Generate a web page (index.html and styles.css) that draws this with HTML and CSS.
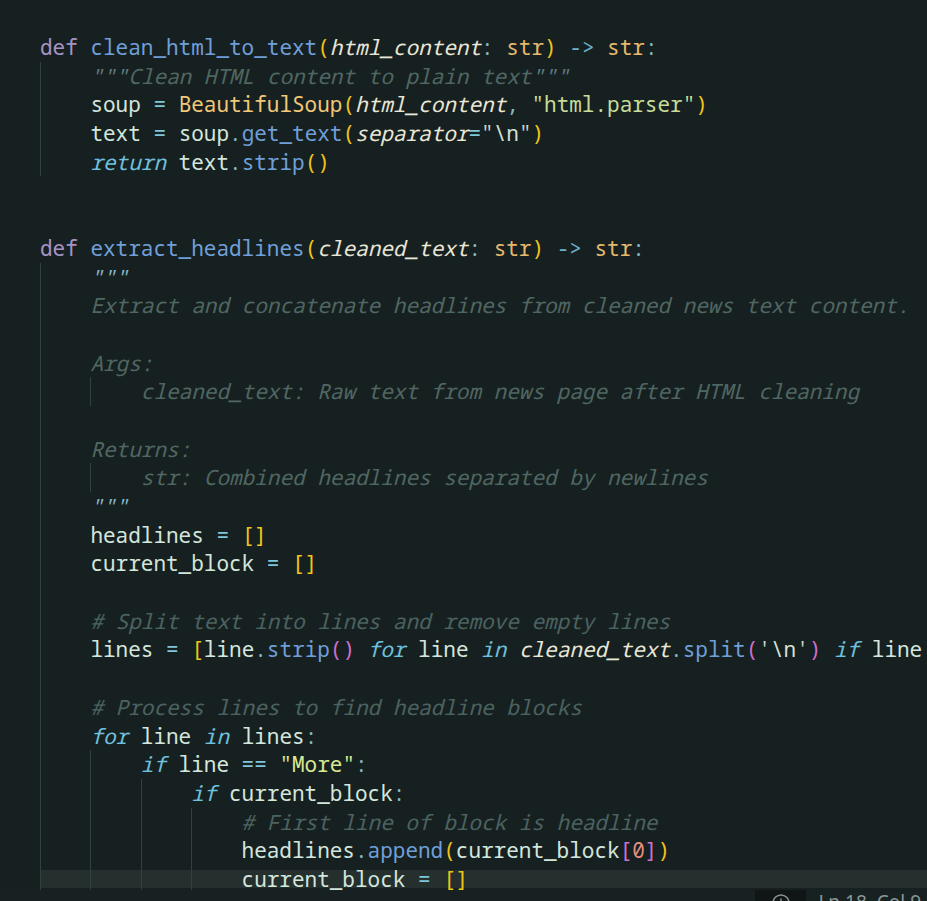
FILE: index.html
```html
<!DOCTYPE html>
<html>
<head>
<meta charset="utf-8">
<link rel="stylesheet" href="styles.css">
</head>
<body>
<div class="screen">
  <div class="editor">
    <div class="line"><span class="kw-def">def</span> <span class="fn">clean_html_to_text</span><span class="b1">(</span><span class="param">html_content</span><span class="punc">:</span> <span class="type">str</span><span class="b1">)</span> <span class="arrow">-&gt;</span> <span class="type">str</span><span class="punc">:</span></div>
    <div class="line"><span class="g"></span><span class="dq">"""</span><span class="doc">Clean HTML content to plain text</span><span class="dq">"""</span></div>
    <div class="line"><span class="g"></span><span class="var">soup</span> <span class="op">=</span> <span class="cls">BeautifulSoup</span><span class="b1">(</span><span class="param">html_content</span><span class="punc">,</span> <span class="str">"html.parser"</span><span class="b1">)</span></div>
    <div class="line"><span class="g"></span><span class="var">text</span> <span class="op">=</span> <span class="var">soup</span><span class="punc">.</span><span class="fn">get_text</span><span class="b1">(</span><span class="param">separator</span><span class="op">=</span><span class="q">"</span><span class="esc">\n</span><span class="q">"</span><span class="b1">)</span></div>
    <div class="line"><span class="g"></span><span class="kw">return</span> <span class="var">text</span><span class="punc">.</span><span class="fn">strip</span><span class="b1">()</span></div>
    <div class="line"></div>
    <div class="line"></div>
    <div class="line"><span class="kw-def">def</span> <span class="fn">extract_headlines</span><span class="b1">(</span><span class="param">cleaned_text</span><span class="punc">:</span> <span class="type">str</span><span class="b1">)</span> <span class="arrow">-&gt;</span> <span class="type">str</span><span class="punc">:</span></div>
    <div class="line"><span class="g"></span><span class="dq2">"""</span></div>
    <div class="line"><span class="g"></span><span class="doc">Extract and concatenate headlines from cleaned news text content.</span></div>
    <div class="line"><span class="g"></span></div>
    <div class="line"><span class="g"></span><span class="doc">Args:</span></div>
    <div class="line"><span class="g"></span><span class="g"></span><span class="doc">cleaned_text: Raw text from news page after HTML cleaning</span></div>
    <div class="line"><span class="g"></span></div>
    <div class="line"><span class="g"></span><span class="doc">Returns:</span></div>
    <div class="line"><span class="g"></span><span class="g"></span><span class="doc">str: Combined headlines separated by newlines</span></div>
    <div class="line"><span class="g"></span><span class="dq2">"""</span></div>
    <div class="line"><span class="g"></span><span class="var">headlines</span> <span class="op">=</span> <span class="b1">[]</span></div>
    <div class="line"><span class="g"></span><span class="var">current_block</span> <span class="op">=</span> <span class="b1">[]</span></div>
    <div class="line"><span class="g"></span></div>
    <div class="line"><span class="g"></span><span class="cmt"># Split text into lines and remove empty lines</span></div>
    <div class="line"><span class="g"></span><span class="var">lines</span> <span class="op">=</span> <span class="b1">[</span><span class="var">line</span><span class="punc">.</span><span class="fn">strip</span><span class="b2">()</span> <span class="kw">for</span> <span class="var">line</span> <span class="kw">in</span> <span class="param">cleaned_text</span><span class="punc">.</span><span class="fn">split</span><span class="b2">(</span><span class="q">'</span><span class="esc">\n</span><span class="q">'</span><span class="b2">)</span> <span class="kw">if</span> <span class="var">line</span></div>
    <div class="line"><span class="g"></span></div>
    <div class="line"><span class="g"></span><span class="cmt"># Process lines to find headline blocks</span></div>
    <div class="line"><span class="g"></span><span class="kw">for</span> <span class="var">line</span> <span class="kw">in</span> <span class="var">lines</span><span class="punc">:</span></div>
    <div class="line"><span class="g"></span><span class="g"></span><span class="kw">if</span> <span class="var">line</span> <span class="op">==</span> <span class="str2">"More"</span><span class="punc">:</span></div>
    <div class="line"><span class="g"></span><span class="g"></span><span class="g"></span><span class="kw">if</span> <span class="var">current_block</span><span class="punc">:</span></div>
    <div class="line"><span class="g"></span><span class="g"></span><span class="g"></span><span class="g"></span><span class="cmt"># First line of block is headline</span></div>
    <div class="line"><span class="g"></span><span class="g"></span><span class="g"></span><span class="g"></span><span class="var">headlines</span><span class="punc">.</span><span class="fn">append</span><span class="b1">(</span><span class="var">current_block</span><span class="b2">[</span><span class="num">0</span><span class="b2">]</span><span class="b1">)</span></div>
    <div class="line current"><span class="g"></span><span class="g"></span><span class="g"></span><span class="g"></span><span class="var">current_block</span> <span class="op">=</span> <span class="b1">[]</span></div>
  </div>
  <div class="status">
    <div class="status-item notif">
      <svg class="bell" width="20" height="20" viewBox="0 0 20 20"><circle cx="10" cy="10" r="8" fill="none" stroke="#8a9694" stroke-width="1.5"/><path d="M10 5.5v5" stroke="#8a9694" stroke-width="1.5"/></svg>
    </div>
    <div class="status-item pos">Ln 18, Col 9</div>
  </div>
</div>
</body>
</html>
```

FILE: styles.css
```css
html, body {
  margin: 0;
  padding: 0;
  background: #172020;
  width: 927px;
  height: 901px;
  overflow: hidden;
}

.screen {
  display: flex;
  flex-direction: column;
  width: 927px;
  height: 901px;
  overflow: hidden;
}

.editor {
  height: 857px;
  padding: 33px 0 0 40px;
  overflow: hidden;
  flex: none;
  font-family: "Noto Sans Mono", "DejaVu Sans Mono", monospace;
  font-size: 21px;
  line-height: 28.7px;
  color: #d3e6dc;
}

.line {
  height: 28.7px;
  white-space: pre;
}

.line.current {
  background: linear-gradient(to bottom, transparent 5px, #242f2e 5px, #242f2e 22.5px, #172020 22.5px);
}

.g {
  display: inline-block;
  width: 4ch;
  height: 28.7px;
  vertical-align: top;
  box-shadow: inset 1px 0 0 #34403f;
}

.kw-def { color: #a893c6; }
.fn { color: #6f9fd8; }
.param { color: #e8e6d6; font-style: italic; }
.punc { color: #82b8c4; }
.type { color: #e6b86c; }
.b1 { color: #f0c419; }
.b2 { color: #cf6fcf; }
.arrow { color: #6db0cf; }
.op { color: #7fc6d8; }
.cls { color: #f0c878; }
.str { color: #c6dc98; }
.str2 { color: #d8e890; }
.q { color: #c9d4c6; }
.esc { color: #d6e0d6; }
.kw { color: #6ec0de; font-style: italic; }
.cmt { color: #4b6360; font-style: italic; }
.doc { color: #4f6762; font-style: italic; }
.dq { color: #607a80; font-style: italic; }
.dq2 { color: #86b4cc; font-style: italic; }
.num { color: #e88f7f; }
.var { color: #d3e6dc; }

.status {
  flex: none;
  height: 11px;
  display: flex;
  justify-content: flex-end;
  align-items: stretch;
  background: #182121;
  font-family: "Noto Sans", "DejaVu Sans", sans-serif;
  font-size: 19px;
  line-height: 24px;
  color: #8a9694;
}

.status-item {
  display: flex;
  align-items: flex-start;
}

.notif {
  width: 51px;
  justify-content: center;
  background: #101616;
  padding-top: 3px;
}

.pos {
  padding: 0 6px 0 12px;
  white-space: nowrap;
}
```
